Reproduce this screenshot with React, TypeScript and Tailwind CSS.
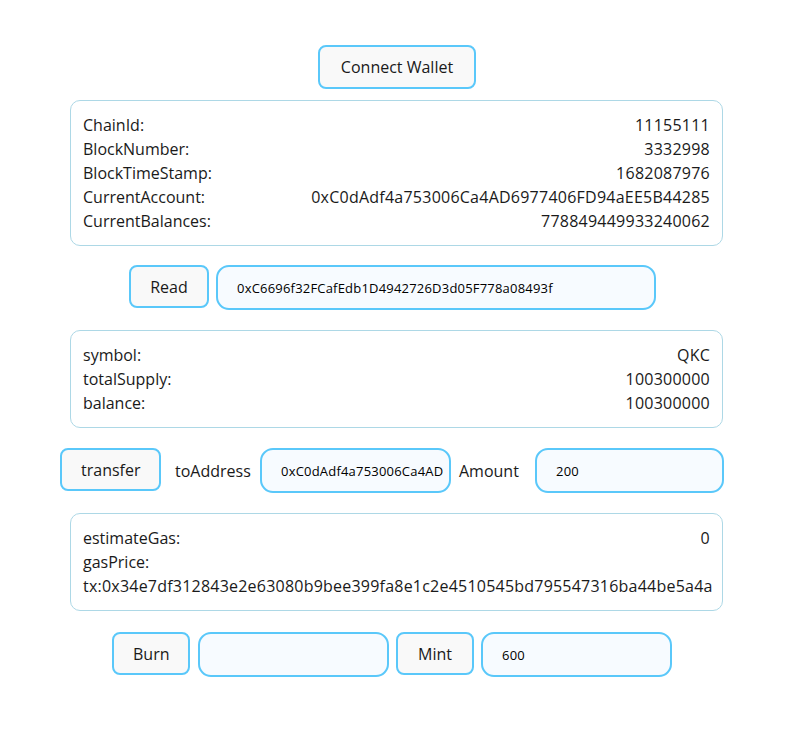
import React from "react";

const font = { fontFamily: '"Segoe UI", "Open Sans", "Noto Sans", sans-serif' };

function Btn({ children, className = "" }: { children: React.ReactNode; className?: string }) {
  return (
    <button
      className={
        "h-[43px] shrink-0 rounded-[8px] border-2 border-[#5ac8fa] bg-[#f9f9f9] px-[19px] text-[16px] text-[#1a1a1a] " +
        className
      }
    >
      {children}
    </button>
  );
}

function Field({ value, className = "" }: { value: string; className?: string }) {
  return (
    <input
      readOnly
      value={value}
      className={
        "h-[45px] shrink-0 rounded-[13px] border-2 border-[#5ac8fa] bg-[#f7fbff] pl-[19px] pr-[6px] text-[13px] tracking-[0.2px] text-black outline-none " +
        className
      }
    />
  );
}

function Row({ label, value }: { label: string; value?: string }) {
  return (
    <div className="flex justify-between leading-[24px]">
      <span>{label}</span>
      <span className="tracking-[0.24px]">{value ?? ""}</span>
    </div>
  );
}

function Card({ children }: { children: React.ReactNode }) {
  return (
    <div className="ml-[70px] w-[653px] rounded-[10px] border border-[#add8e6] bg-white px-[12px] py-[12px] text-[16px] text-[#1a1a1a]">
      {children}
    </div>
  );
}

export default function App() {
  return (
    <div className="min-h-[750px] w-[796px] bg-white pt-[45px]" style={font}>
      <div className="flex h-[44px] justify-center">
        <button className="ml-[-2px] h-[44px] w-[158px] rounded-[8px] border-2 border-[#5ac8fa] bg-[#f9f9f9] text-[16px] text-[#1a1a1a]">
          Connect Wallet
        </button>
      </div>

      <div className="mt-[11px]">
        <Card>
          <Row label="ChainId:" value="11155111" />
          <Row label="BlockNumber:" value="3332998" />
          <Row label="BlockTimeStamp:" value="1682087976" />
          <Row label="CurrentAccount:" value="0xC0dAdf4a753006Ca4AD6977406FD94aEE5B44285" />
          <Row label="CurrentBalances:" value="778849449933240062" />
        </Card>
      </div>

      <div className="mt-[19px] flex h-[45px] items-start pl-[129px]">
        <Btn className="w-[80px] px-0">Read</Btn>
        <Field value="0xC6696f32FCafEdb1D4942726D3d05F778a08493f" className="ml-[7px] w-[440px]" />
      </div>

      <div className="mt-[20px]">
        <Card>
          <Row label="symbol:" value="QKC" />
          <Row label="totalSupply:" value="100300000" />
          <Row label="balance:" value="100300000" />
        </Card>
      </div>

      <div className="mt-[20px] flex h-[45px] items-start pl-[60px]">
        <Btn className="w-[101px] px-0">transfer</Btn>
        <span className="ml-[14px] flex h-[45px] w-[78px] items-center text-[16px] text-[#1a1a1a]">toAddress</span>
        <Field value="0xC0dAdf4a753006Ca4AD6977406FD94aEE5B44285" className="ml-[7px] w-[191px]" />
        <span className="ml-[8px] flex h-[45px] w-[62px] items-center text-[16px] text-[#1a1a1a]">Amount</span>
        <Field value="200" className="ml-[14px] w-[189px] pl-[17px]" />
      </div>

      <div className="mt-[20px]">
        <Card>
          <Row label="estimateGas:" value="0" />
          <Row label="gasPrice:" />
          <div className="leading-[24px] tracking-[0.22px]">tx:0x34e7df312843e2e63080b9bee399fa8e1c2e4510545bd795547316ba44be5a4a</div>
        </Card>
      </div>

      <div className="mt-[21px] flex h-[45px] items-start pl-[112px]">
        <Btn className="w-[78px] px-0">Burn</Btn>
        <Field value="" className="ml-[8px] w-[191px]" />
        <Btn className="ml-[7px] w-[78px] px-0">Mint</Btn>
        <Field value="600" className="ml-[7px] w-[191px]" />
      </div>
    </div>
  );
}
